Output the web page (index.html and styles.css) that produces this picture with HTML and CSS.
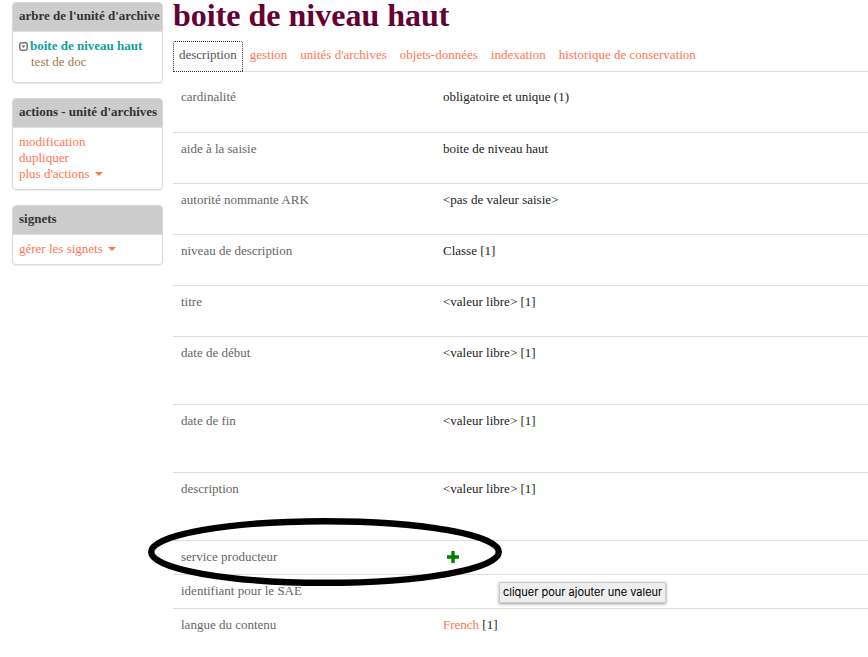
FILE: index.html
```html
<!DOCTYPE html>
<html lang="fr">
<head>
<meta charset="utf-8">
<title>boite de niveau haut</title>
<link rel="stylesheet" href="styles.css">
</head>
<body>
<div class="page">
  <aside class="sidebar">
    <section class="panel">
      <h2 class="panel-title">arbre de l'unité d'archive</h2>
      <ul class="panel-body tree">
        <li class="tree-item">
          <svg class="toggle" viewBox="0 0 9 9" aria-hidden="true"><rect x="0.8" y="0.8" width="7.4" height="7.4" rx="1.6" fill="none" stroke="#777" stroke-width="1.5"/><path d="M2.6 3.6h3.8L4.5 6z" fill="#666"/></svg>
          <a class="current" href="#">boite de niveau haut</a>
        </li>
        <li class="tree-child"><a class="doc" href="#">test de doc</a></li>
      </ul>
    </section>
    <section class="panel">
      <h2 class="panel-title">actions - unité d'archives</h2>
      <ul class="panel-body">
        <li><a href="#">modification</a></li>
        <li><a href="#">dupliquer</a></li>
        <li><button class="menu" type="button">plus d'actions<span class="caret"></span></button></li>
      </ul>
    </section>
    <section class="panel">
      <h2 class="panel-title">signets</h2>
      <ul class="panel-body">
        <li><button class="menu" type="button">gérer les signets<span class="caret"></span></button></li>
      </ul>
    </section>
  </aside>
  <main class="content">
    <h1 class="title">boite de niveau haut</h1>
    <nav class="tabs">
      <a class="tab active" href="#">description</a>
      <a class="tab" href="#">gestion</a>
      <a class="tab" href="#">unités d'archives</a>
      <a class="tab" href="#">objets-données</a>
      <a class="tab" href="#">indexation</a>
      <a class="tab" href="#">historique de conservation</a>
    </nav>
    <table class="fields">
      <tbody>
        <tr><th scope="row">cardinalité</th><td>obligatoire et unique (1)</td></tr>
        <tr><th scope="row">aide à la saisie</th><td>boite de niveau haut</td></tr>
        <tr><th scope="row">autorité nommante ARK</th><td>&lt;pas de valeur saisie&gt;</td></tr>
        <tr><th scope="row">niveau de description</th><td>Classe [1]</td></tr>
        <tr><th scope="row">titre</th><td>&lt;valeur libre&gt; [1]</td></tr>
        <tr class="tall"><th scope="row">date de début</th><td>&lt;valeur libre&gt; [1]</td></tr>
        <tr class="tall"><th scope="row">date de fin</th><td>&lt;valeur libre&gt; [1]</td></tr>
        <tr class="tall"><th scope="row">description</th><td>&lt;valeur libre&gt; [1]</td></tr>
        <tr class="short">
          <th class="anchor" scope="row">service producteur
            <svg class="highlight" viewBox="0 0 354 68" aria-hidden="true"><ellipse cx="177" cy="34" rx="173.8" ry="30.8" fill="none" stroke="#000" stroke-width="6.4"/></svg>
          </th>
          <td class="anchor">
            <button class="add" type="button" aria-label="ajouter"><svg class="plus" viewBox="0 0 12 12" aria-hidden="true"><path d="M4.3 0h3.4v4.3H12v3.4H7.7V12H4.3V7.7H0V4.3h4.3z" fill="#008000"/></svg></button>
            <span class="tooltip" role="tooltip">cliquer pour ajouter une valeur</span>
          </td>
        </tr>
        <tr class="short"><th scope="row">identifiant pour le SAE</th><td></td></tr>
        <tr class="short"><th scope="row">langue du contenu</th><td><a href="#">French</a> [1]</td></tr>
      </tbody>
    </table>
  </main>
</div>
</body>
</html>
```
FILE: styles.css
```css
* {
  box-sizing: border-box;
}

body {
  margin: 0;
  background: #fff;
  color: #222;
  font: 13px/17px "Liberation Serif", serif;
}

a {
  color: #ff7750;
  text-decoration: none;
}

.page {
  display: flex;
  gap: 10px;
  padding: 2px 0 0 12px;
}

.sidebar {
  display: flex;
  flex: 0 0 151px;
  flex-direction: column;
  gap: 15px;
  min-width: 0;
}

.panel {
  border: 1px solid #d9d9d9;
  border-radius: 4px;
  box-shadow: 0 1px 1px rgba(0, 0, 0, 0.08);
}

.panel-title {
  margin: 0;
  padding: 5px 0 7px 6px;
  border-bottom: 1px solid #ddd;
  border-radius: 3px 3px 0 0;
  background: #ccc;
  color: #333;
  font-size: 13px;
  line-height: 16px;
  white-space: nowrap;
}

.panel-body {
  margin: 0;
  padding: 6px 6px 7px;
  line-height: 16px;
  list-style: none;
}

.tree {
  padding-bottom: 12px;
}

.tree-item {
  display: flex;
  align-items: center;
  gap: 2px;
  white-space: nowrap;
}

.toggle {
  width: 9px;
  height: 9px;
}

.current {
  color: #0f9f9f;
  font-weight: bold;
}

.tree-child {
  padding-left: 12px;
}

.doc {
  color: #a6793d;
}

.menu {
  display: flex;
  align-items: center;
  gap: 5px;
  padding: 0;
  border: 0;
  background: none;
  color: #ff7750;
  font: inherit;
}

.caret {
  border: 4px solid transparent;
  border-top-color: #ff7750;
  border-bottom: 0;
}

.content {
  flex: 1;
  min-width: 0;
}

.title {
  margin: 0 0 13px;
  color: #603;
  font-size: 32px;
  line-height: 26px;
}

.tabs {
  display: flex;
  gap: 1px;
  border-bottom: 1px solid #ddd;
  white-space: nowrap;
}

.tab {
  padding: 5px 6px 8px;
}

.active {
  margin-bottom: -1px;
  padding: 4px 5px 8px;
  border: 1px dotted #333;
  border-radius: 2px 2px 0 0;
  background: #fff;
  color: #555;
}

.fields {
  width: 100%;
  margin-top: 9px;
  border-collapse: collapse;
}

.fields tr {
  height: 51px;
}

.fields tr + tr {
  border-top: 1px solid #ddd;
}

.fields .tall {
  height: 68px;
}

.fields .short {
  height: 34px;
}

.fields th,
.fields td {
  padding: 7px 8px;
  text-align: left;
  vertical-align: top;
}

.fields th {
  width: 262px;
  color: #666;
  font-weight: normal;
}

.fields .anchor {
  position: relative;
}

.highlight {
  position: absolute;
  z-index: 1;
  top: -23px;
  left: -25px;
  width: 354px;
  height: 68px;
  pointer-events: none;
}

.add {
  display: flex;
  padding: 3px 4px;
  border: 0;
  background: none;
}

.plus {
  width: 12px;
  height: 12px;
}

.tooltip {
  position: absolute;
  z-index: 2;
  top: 41px;
  left: 64px;
  padding: 1px 3px;
  border: 1px solid #ccc;
  background: #eee;
  box-shadow: 0 1px 3px rgba(0, 0, 0, 0.4);
  color: #000;
  font: 11px/17px Inter, sans-serif;
  white-space: nowrap;
}
```
